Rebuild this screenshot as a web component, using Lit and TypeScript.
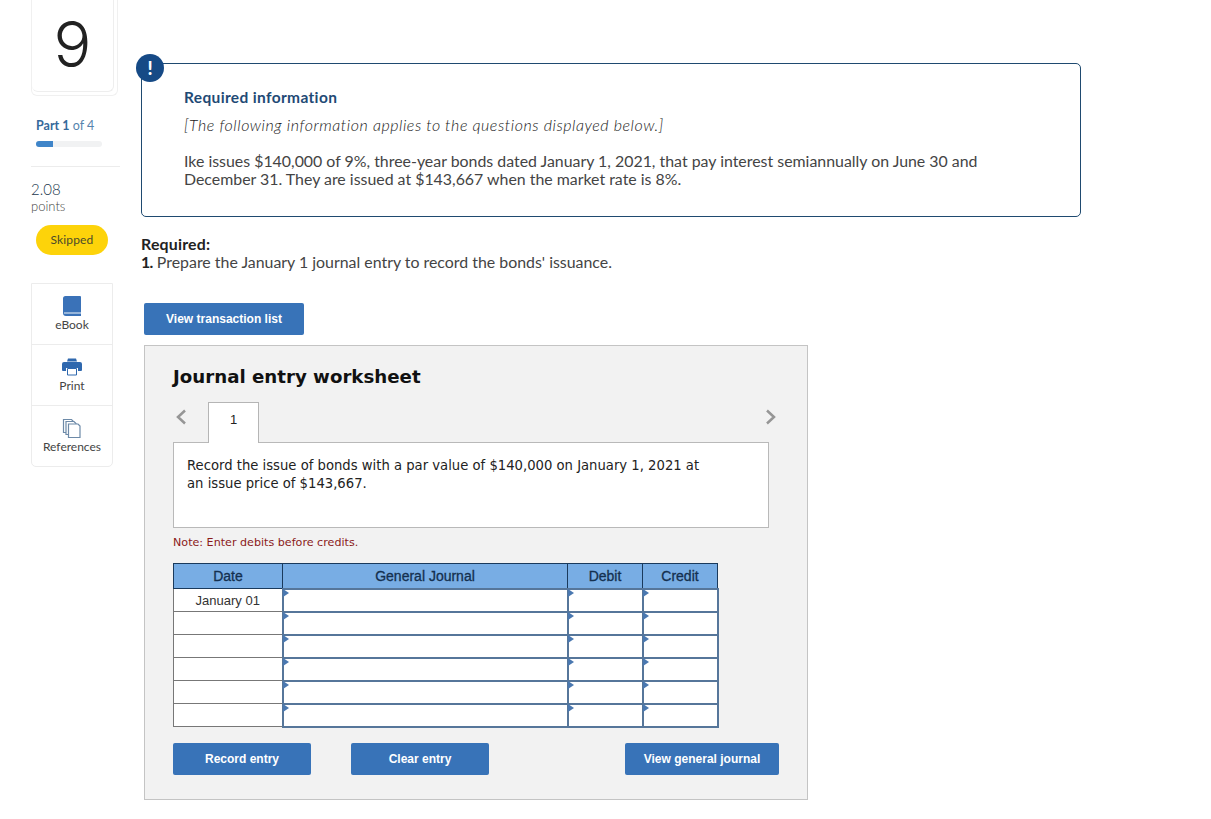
import { LitElement, html, css } from "lit";
import { customElement } from "lit/decorators.js";

const ROWS = ["January 01", "", "", "", "", ""];

@customElement("app-root")
export class AppRoot extends LitElement {
  static styles = css`
    :host { display: block; width: 1211px; height: 819px; overflow: hidden; background: #fff; font-family: "Lato", "Open Sans", sans-serif; color: #333; }
    * { box-sizing: border-box; }
    .page { display: flex; align-items: flex-start; padding-left: 31px; }
    .side { width: 82px; flex: none; margin-right: 28px; display: flex; flex-direction: column; }
    .num-wrap { height: 96px; width: 87px; border: 1px solid #f0f0f0; border-top: 0; border-radius: 0 0 6px 6px; }
    .num { width: 82px; height: 92px; border: 1px solid #eeeeee; border-top: 0; border-left: 0; border-radius: 0 0 6px 6px; display: flex; justify-content: center; font: 300 63px/88px "Inter", sans-serif; color: #222; }
    .part { margin: 22px 0 0 5px; font-size: 12.5px; line-height: 15px; color: #5583ad; white-space: nowrap; }
    .part b { color: #35699b; }
    .bar { margin: 8px 0 0 5px; width: 66px; height: 6px; border-radius: 3px; background: #f1f2f3; overflow: hidden; }
    .bar i { display: block; width: 17px; height: 100%; background: #3f85c9; }
    .rule { width: 89px; height: 1px; background: #ececec; margin-top: 19px; }
    .pts { margin-top: 14px; font-size: 15px; font-weight: 300; line-height: 17px; color: #22384d; }
    .pl { font-size: 13px; font-weight: 300; line-height: 17px; color: #444; }
    .pill { margin: 10px 0 0 5px; width: 72px; height: 30px; padding-bottom: 1px; border-radius: 15px; background: #fdd30a; color: #4b4a2a; font-size: 12px; letter-spacing: 0.15px; display: flex; align-items: center; justify-content: center; }
    .tools { margin-top: 28px; width: 82px; height: 184px; border: 1px solid #ececec; border-radius: 0 0 5px 5px; display: flex; flex-direction: column; }
    .tool { flex: 1; display: flex; flex-direction: column; align-items: center; padding-top: 12px; font-size: 12px; line-height: 14px; color: #444; border-bottom: 1px solid #ececec; }
    .tool:last-child { border-bottom: 0; }
    .tool svg { display: block; margin-bottom: 2px; }
    .main { width: 940px; flex: none; padding-top: 63px; }
    .alert { position: relative; height: 154px; border: 1px solid #1f4a70; border-radius: 5px; padding: 24px 42px 0; color: #444; }
    .badge { position: absolute; left: -6px; top: -10px; width: 28px; height: 28px; border-radius: 50%; background: #164a86; color: #fff; font: 900 18px/28px "Lato", sans-serif; text-align: center; }
    .alert h2 { margin: 0; font-size: 15.5px; line-height: 18px; letter-spacing: 0.35px; font-weight: 700; color: #1f4a75; }
    .alert .em { margin: 10px 0 0; font-size: 16px; line-height: 18px; font-weight: 300; letter-spacing: 0.55px; font-style: italic; color: #222; }
    .alert .bd { margin: 18px 0 0; font-size: 15.9px; line-height: 18px; width: 820px; }
    .req { margin-top: 18px; font-size: 15.9px; line-height: 18px; color: #444; }
    .req b { color: #222; letter-spacing: 0.2px; }
    .req b.n { letter-spacing: -0.6px; }
    .btn { display: flex; align-items: center; justify-content: center; height: 32px; background: #3873b8; color: #fff; border-radius: 2px; font: 700 12px "Liberation Sans", sans-serif; }
    .vt { width: 160px; margin: 32px 0 10px 3px; }
    .ws { margin-left: 3px; width: 664px; height: 455px; background: #f2f2f2; border: 1px solid #c4c4c4; padding: 20px 28px 0; }
    .ws h3 { margin: 0; font: 700 18.2px/22px "DejaVu Sans", sans-serif; color: #111; }
    .tabs { display: flex; align-items: flex-start; margin-top: 14px; height: 40px; position: relative; }
    .chev { width: 35px; padding: 7px 0 0 2px; }
    .chev svg, .chevr svg { display: block; }
    .tab { width: 51px; height: 41px; background: #fff; border: 1px solid #b5b5b5; border-bottom: 0; display: flex; align-items: center; justify-content: center; font: 13px "Liberation Sans", sans-serif; color: #222; position: relative; z-index: 1; padding-bottom: 7px; }
    .chevr { margin-left: auto; margin-right: 2px; padding-top: 7px; }
    .box { width: 596px; height: 86px; background: #fff; border: 1px solid #b9b9b9; padding: 14px 13px; font: 13.2px/18px "DejaVu Sans", sans-serif; color: #222; white-space: nowrap; }
    .note { margin-top: 8px; font: 11.14px/14px "DejaVu Sans", sans-serif; color: #8b1a1a; }
    table { margin-top: 13px; border-collapse: collapse; table-layout: fixed; width: 544px; font: 14px "Liberation Sans", sans-serif; }
    th { height: 25px; padding: 0; background: #78ade4; border: 1px solid #1a3a5c; font-weight: 400; color: #14304f; -webkit-text-stroke: 0.3px #14304f; }
    td { height: 23px; padding: 0; background: #fff; }
    td.d { border: 1px solid #777; font-size: 13px; text-align: center; color: #333; }
    td.e { border: 2px solid #56769a; position: relative; }
    td.e::before { content: ""; position: absolute; left: -1px; top: -1px; border-left: 6px solid #4a78b0; border-top: 4px solid transparent; border-bottom: 4px solid transparent; }
    .acts { display: flex; margin-top: 15px; width: 606px; }
    .acts .btn { width: 138px; }
    .acts .btn + .btn { margin-left: 40px; }
    .acts .btn.j { width: 154px; margin-left: auto; }
  `;

  render() {
    return html`<div class="page">
      <aside class="side">
        <div class="num-wrap"><div class="num">9</div></div>
        <div class="part"><b>Part 1</b> of 4</div>
        <div class="bar"><i></i></div>
        <div class="rule"></div>
        <div class="pts">2.08</div>
        <div class="pl">points</div>
        <div class="pill">Skipped</div>
        <div class="tools">
          <div class="tool">
            <svg width="18" height="20" viewBox="0 0 18 20"><path d="M2.500 0H17a1 1 0 0 1 1 1v19H3a3 3 0 0 1-3-3V2.500A2.500 2.500 0 0 1 2.500 0z" fill="#3a72b8"/><path d="M1 17h17" stroke="#d6e3f1" stroke-width="1.200"/></svg>
            eBook
          </div>
          <div class="tool">
            <svg width="20" height="20" viewBox="0 0 20 20"><path d="M6 1.500h8l1 3H5z" fill="#2f68ae"/><path d="M2 5h16a2 2 0 0 1 2 2v6a1 1 0 0 1-1 1h-3v-3H4v3H1a1 1 0 0 1-1-1V7a2 2 0 0 1 2-2z" fill="#2f68ae"/><path d="M5.500 11.500h9V18h-9z" fill="#fff" stroke="#2f68ae"/></svg>
            Print
          </div>
          <div class="tool">
            <svg width="20" height="20" viewBox="0 0 20 20" fill="#fff" stroke="#6d8aa8" stroke-width="1.200"><path d="M1.500 1.500h8l2 2v11h-10z"/><path d="M4 3.500h8l2 2v11H4z"/><path d="M6.500 6h9.500l2 2v11.500H6.500z"/></svg>
            References
          </div>
        </div>
      </aside>
      <main class="main">
        <section class="alert">
          <div class="badge">!</div>
          <h2>Required information</h2>
          <p class="em">[The following information applies to the questions displayed below.]</p>
          <p class="bd">Ike issues $140,000 of 9%, three-year bonds dated January 1, 2021, that pay interest semiannually on June 30 and December 31. They are issued at $143,667 when the market rate is 8%.</p>
        </section>
        <div class="req"><b>Required:</b><br /><b class="n">1.</b> Prepare the January 1 journal entry to record the bonds' issuance.</div>
        <div class="btn vt">View transaction list</div>
        <section class="ws">
          <h3>Journal entry worksheet</h3>
          <div class="tabs">
            <div class="chev"><svg width="12" height="16" viewBox="0 0 12 16"><path d="M10 1.500 3 8l7 6.500" fill="none" stroke="#969696" stroke-width="2.500"/></svg></div>
            <div class="tab">1</div>
            <div class="chevr"><svg width="12" height="16" viewBox="0 0 12 16"><path d="M2 1.500 9 8l-7 6.500" fill="none" stroke="#969696" stroke-width="2.500"/></svg></div>
          </div>
          <div class="box">Record the issue of bonds with a par value of $140,000 on January 1, 2021 at<br />an issue price of $143,667.</div>
          <div class="note">Note: Enter debits before credits.</div>
          <table>
            <colgroup><col style="width:109px" /><col style="width:285px" /><col style="width:75px" /><col style="width:75px" /></colgroup>
            <thead><tr><th>Date</th><th>General Journal</th><th>Debit</th><th>Credit</th></tr></thead>
            <tbody>${ROWS.map((d) => html`<tr><td class="d">${d}</td><td class="e"></td><td class="e"></td><td class="e"></td></tr>`)}</tbody>
          </table>
          <div class="acts">
            <div class="btn">Record entry</div>
            <div class="btn">Clear entry</div>
            <div class="btn j">View general journal</div>
          </div>
        </section>
      </main>
    </div>`;
  }
}
